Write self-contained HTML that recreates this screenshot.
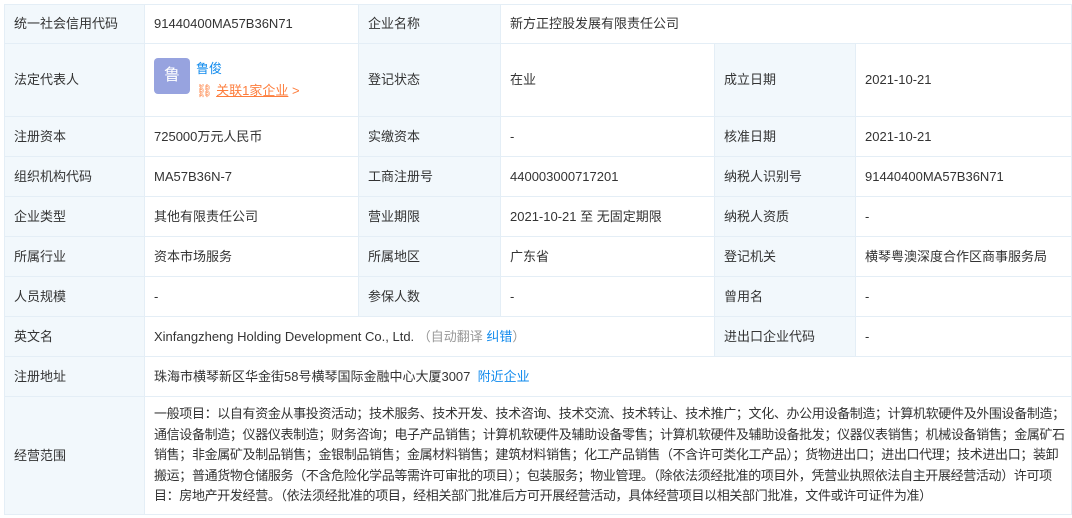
<!DOCTYPE html>
<html><head><meta charset="utf-8"><style>
body{margin:0;background:#fff;width:1072px;height:518px;overflow:hidden;font-family:"Liberation Sans","Noto Sans CJK SC",sans-serif;font-size:13px;color:#333}
table{position:absolute;left:4px;top:4px;border-collapse:collapse;table-layout:fixed;width:1067px}
td{border:1px solid #e4eef6;padding:0 0 0 9px;vertical-align:middle;line-height:20px;white-space:nowrap;overflow:hidden}
td.l{background:#f2f8fc}
tr{height:40px}
a{color:#128bed;text-decoration:none}
.g{color:#999}
.scope{line-height:20.5px;letter-spacing:-0.35px}
.av{float:left;width:36px;height:36px;border-radius:4px;background:#97a3df;color:#fff;font-size:16px;text-align:center;line-height:36px;margin:0 6px 0 0}
</style></head><body>
<table>
<colgroup><col style="width:140px"><col style="width:214px"><col style="width:142px"><col style="width:214px"><col style="width:141px"><col style="width:216px"></colgroup>
<tr style="height:39px"><td class="l">统一社会信用代码</td><td>91440400MA57B36N71</td><td class="l">企业名称</td><td colspan="3">新方正控股发展有限责任公司</td></tr>
<tr style="height:73px"><td class="l">法定代表人</td><td><div class="av">鲁</div><div><a style="display:block;line-height:22px">鲁俊</a><span style="color:#fd7d3c;line-height:22px">⛓ <u>关联1家企业</u> &gt;</span></div></td><td class="l">登记状态</td><td>在业</td><td class="l">成立日期</td><td>2021-10-21</td></tr>
<tr><td class="l">注册资本</td><td>725000万元人民币</td><td class="l">实缴资本</td><td>-</td><td class="l">核准日期</td><td>2021-10-21</td></tr>
<tr><td class="l">组织机构代码</td><td>MA57B36N-7</td><td class="l">工商注册号</td><td>440003000717201</td><td class="l">纳税人识别号</td><td>91440400MA57B36N71</td></tr>
<tr><td class="l">企业类型</td><td>其他有限责任公司</td><td class="l">营业期限</td><td>2021-10-21 至 无固定期限</td><td class="l">纳税人资质</td><td>-</td></tr>
<tr><td class="l">所属行业</td><td>资本市场服务</td><td class="l">所属地区</td><td>广东省</td><td class="l">登记机关</td><td>横琴粤澳深度合作区商事服务局</td></tr>
<tr><td class="l">人员规模</td><td>-</td><td class="l">参保人数</td><td>-</td><td class="l">曾用名</td><td>-</td></tr>
<tr><td class="l">英文名</td><td colspan="3">Xinfangzheng Holding Development Co., Ltd. <span class="g">（自动翻译 <a>纠错</a>）</span></td><td class="l">进出口企业代码</td><td>-</td></tr>
<tr><td class="l">注册地址</td><td colspan="5">珠海市横琴新区华金街58号横琴国际金融中心大厦3007 &nbsp;<a>附近企业</a></td></tr>
<tr style="height:118px"><td class="l">经营范围</td><td colspan="5" class="scope">一般项目：以自有资金从事投资活动；技术服务、技术开发、技术咨询、技术交流、技术转让、技术推广；文化、办公用设备制造；计算机软硬件及外围设备制造；<br>通信设备制造；仪器仪表制造；财务咨询；电子产品销售；计算机软硬件及辅助设备零售；计算机软硬件及辅助设备批发；仪器仪表销售；机械设备销售；金属矿石<br>销售；非金属矿及制品销售；金银制品销售；金属材料销售；建筑材料销售；化工产品销售（不含许可类化工产品）；货物进出口；进出口代理；技术进出口；装卸<br>搬运；普通货物仓储服务（不含危险化学品等需许可审批的项目）；包装服务；物业管理。（除依法须经批准的项目外，凭营业执照依法自主开展经营活动）许可项<br>目：房地产开发经营。（依法须经批准的项目，经相关部门批准后方可开展经营活动，具体经营项目以相关部门批准，文件或许可证件为准）</td></tr>
</table>
</body></html>
